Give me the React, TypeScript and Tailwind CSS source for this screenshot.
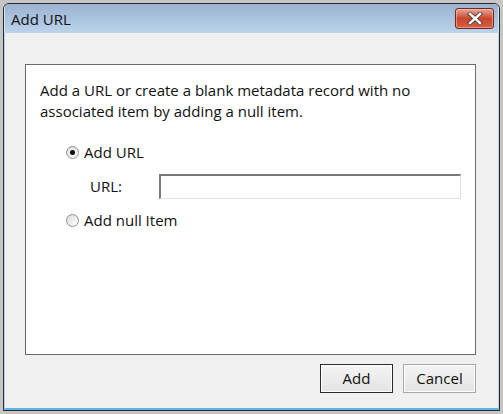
import React from 'react';

const font = { fontFamily: '"Open Sans", "Noto Sans", Arial, sans-serif' };

function Radio({ checked }: { checked?: boolean }) {
  return (
    <span className="relative w-[13px] h-[13px] rounded-full border border-[#8f8f8f] bg-gradient-to-br from-[#dcdcdc] to-[#ffffff] flex items-center justify-center shrink-0">
      {checked && <span className="w-[5px] h-[5px] rounded-full bg-[#111]" />}
    </span>
  );
}

function CloseButton() {
  return (
    <div className="w-[39px] h-[21px] rounded-[3px] border border-[#6b2b24] bg-gradient-to-b from-[#e9a595] via-[#c9452d] to-[#d8603f] flex items-center justify-center shadow-[inset_0_0_0_1px_rgba(255,220,210,0.45)]">
      <svg width="16" height="13" viewBox="0 0 16 13">
        <path d="M3 2 L13 11 M13 2 L3 11" stroke="#4a3a3a" strokeWidth="4.2" strokeLinecap="square" fill="none" />
        <path d="M3 2 L13 11 M13 2 L3 11" stroke="#ffffff" strokeWidth="2.4" strokeLinecap="square" fill="none" />
      </svg>
    </div>
  );
}

export default function App() {
  return (
    <div className="w-[503px] h-[414px] bg-[#c6c6c6] pt-[3px] pl-[3px]" style={font}>
      <div className="w-[497px] h-[408px] flex flex-col border border-[#2a2a2a] rounded-t-[6px] overflow-hidden">
        {/* Title bar */}
        <div className="h-[29px] shrink-0 bg-gradient-to-b from-[#9bb3cf] to-[#bbd3ec] flex items-center justify-between pl-[6px] pr-[4px] border-l border-r border-[#d5e3f1]">
          <span className="text-[15px] text-[#111] leading-none pt-[2px]">Add URL</span>
          <CloseButton />
        </div>

        {/* Client area */}
        <div className="flex-1 bg-[#f0f0f0] border-x border-b-2 border-x-[#b6d6f0] border-b-[#5ab6e6] pl-[20px] pt-[31px]">
          <div className="w-[451px] h-[291px] bg-white border border-[#6a6a6a] pl-[14px] pr-[10px] pt-[15px] text-[15px] text-[#111]">
            <p className="leading-[21px]">
              Add a URL or create a blank metadata record with no associated item by adding a null item.
            </p>
            <div className="mt-[20px] pl-[26px] flex flex-col">
              <label className="flex items-center gap-[5px] h-[20px]">
                <Radio checked />
                <span>Add URL</span>
              </label>
              <div className="flex items-center mt-[12px] h-[25px]">
                <span className="w-[93px] pl-[24px]">URL:</span>
                <input
                  className="w-[302px] h-[25px] bg-white border-t-2 border-l-2 border-b border-r border-t-[#7a7a7a] border-l-[#7a7a7a] border-b-[#e2e2e2] border-r-[#e2e2e2] outline-none"
                  defaultValue=""
                />
              </div>
              <label className="flex items-center gap-[5px] h-[20px] mt-[11px]">
                <Radio />
                <span>Add null Item</span>
              </label>
            </div>
          </div>

          <div className="w-[451px] flex justify-end gap-[10px] mt-[9px]">
            <button className="w-[73px] h-[29px] border border-[#2b2b2b] bg-gradient-to-b from-[#f4f4f4] to-[#e4e4e4] text-[15px] text-[#111] shadow-[inset_0_0_0_1px_#ffffff]">
              Add
            </button>
            <button className="w-[73px] h-[29px] border border-[#a9a9a9] bg-gradient-to-b from-[#f4f4f4] to-[#e4e4e4] text-[15px] text-[#111] shadow-[inset_0_0_0_1px_#ffffff]">
              Cancel
            </button>
          </div>
        </div>
      </div>
    </div>
  );
}
